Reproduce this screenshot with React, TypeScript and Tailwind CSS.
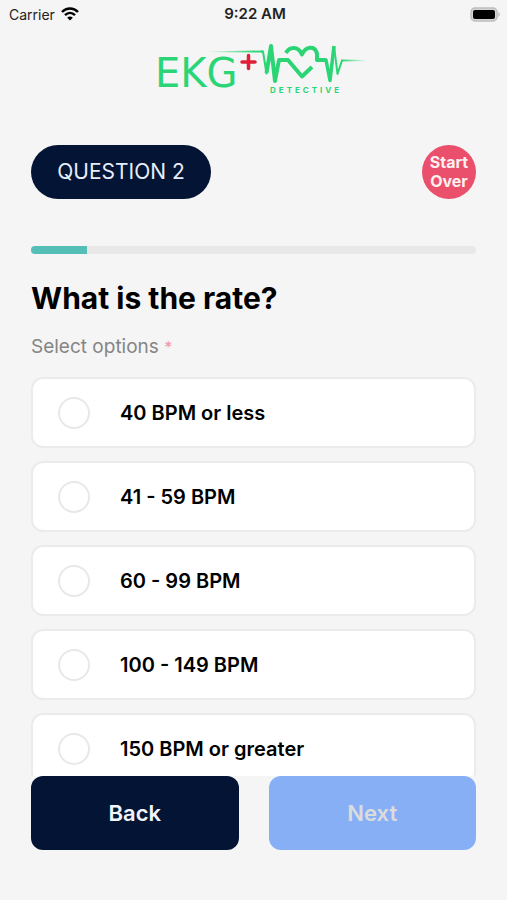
import React, { useState } from "react";

const OPTIONS = [
  "40 BPM or less",
  "41 - 59 BPM",
  "60 - 99 BPM",
  "100 - 149 BPM",
  "150 BPM or greater",
];

const PROGRESS = 12.5;

function StatusBar() {
  return (
    <div className="grid h-7 grid-cols-3 items-center pl-[9px] pr-[6px] text-[14px] text-[#222]">
      <div className="flex items-center gap-[6px]">
        <span>Carrier</span>
        <svg width="18" height="14" viewBox="0 0 18 14" fill="none" stroke="#000" strokeWidth="2.5" aria-hidden="true">
          <path d="M1 5 C5.5 .4 12.500 .4 17 5" />
          <path d="M4 8.200 C7 5.300 11 5.300 14 8.200" />
          <path d="M9 13.500 L6.200 10.700 C7.800 9.200 10.200 9.200 11.800 10.700 Z" fill="#000" stroke="none" />
        </svg>
      </div>
      <span className="text-center text-[15px] font-semibold">9:22 AM</span>
      <svg className="justify-self-end" width="31" height="15" viewBox="0 0 31 15" aria-hidden="true">
        <rect x="1" y="1" width="26" height="13" rx="4" fill="#d4d4d4" stroke="#bdbdbd" strokeWidth="1.500" />
        <rect x="3" y="3" width="22" height="9" rx="2" fill="#000" />
        <path d="M28.500 5 Q31 7.500 28.500 10 Z" fill="#aaa" />
      </svg>
    </div>
  );
}

function Logo() {
  return (
    <svg className="mx-auto" width="230" height="60" viewBox="-16 0 230 60" fill="none" role="img" aria-label="EKG Detective">
      <defs>
        <linearGradient id="lead-in" gradientUnits="userSpaceOnUse" x1="50" y1="0" x2="100" y2="0">
          <stop offset="0" stopColor="#2bd575" stopOpacity="0" />
          <stop offset="1" stopColor="#2bd575" />
        </linearGradient>
        <linearGradient id="lead-out" gradientUnits="userSpaceOnUse" x1="187" y1="0" x2="212" y2="0">
          <stop offset="0" stopColor="#2bd575" />
          <stop offset="1" stopColor="#2bd575" stopOpacity="0" />
        </linearGradient>
      </defs>
      <text x="0" y="47" fill="#2bd575" className="font-['DejaVu_Sans'] text-[40px]">EKG</text>
      <path d="M93.500 15.500 V28.500 M87 22 H100" stroke="#e01f36" strokeWidth="3.500" strokeLinecap="round" />

      {/* Pulse line and heart */}
      <path d="M48 11.500 L108 10.500 V12.500 L48 12 Z" fill="url(#lead-in)" />
      <g stroke="#2bd575" strokeLinejoin="round">
        <path d="M106 11.500 H108 L111.500 33.500 L116 6" strokeWidth="2" />
        <path d="M111.500 33 L116 6 L120 41 L124 20 H133 L147 36.500 L157 27" strokeWidth="4" />
        <path d="M131 13 C134 7 143 5 147 14.500 C151 6 159 6 161.500 12 C163 16 161.500 18 162 20 H171" strokeWidth="4" />
        <path d="M169 20 H171 L175 40.500 L179 6" strokeWidth="3.500" />
        <path d="M179 6 L182.500 34 L187 20.500" strokeWidth="2" />
      </g>
      <path d="M186 19.500 L212 20 V21 L186 21.500 Z" fill="url(#lead-out)" />
      <text x="115" y="53" fill="#2bd575" className="text-[8px] font-bold tracking-[3px]">DETECTIVE</text>
    </svg>
  );
}

export default function App() {
  const [selected, setSelected] = useState<string | null>(null);

  return (
    <div className="flex h-screen flex-col bg-[#f5f5f5] font-['Inter',sans-serif] text-black">
      <StatusBar />

      <header className="pt-3">
        <Logo />
      </header>

      <main className="flex min-h-0 flex-1 flex-col px-[31px] pt-[45px]">
        <div className="flex items-center justify-between">
          <div className="flex h-[54px] w-[180px] items-center justify-center rounded-full bg-[#041434] text-[21px] text-[#e8edfa]">
            QUESTION 2
          </div>
          <button
            type="button"
            onClick={() => setSelected(null)}
            className="size-[54px] rounded-full bg-[#ea506b] text-[16px] leading-[19px] font-bold text-[#fff0f0]"
          >
            Start Over
          </button>
        </div>

        <div className="mt-[47px] h-2 shrink-0 overflow-hidden rounded-full bg-[#e8e8e8]">
          <div className="h-full bg-[#55bfb7]" style={{ width: `${PROGRESS}%` }} />
        </div>

        <h1 id="question" className="mt-6 text-[30px] leading-10 font-bold">What is the rate?</h1>
        <p className="mt-[15px] text-[19px] leading-7 text-[#858585]">
          Select options <span className="text-[16px] text-[#f0959f]">*</span>
        </p>

        {/* Answer list */}
        <div role="radiogroup" aria-labelledby="question" className="mt-4 min-h-0 flex-1 overflow-y-auto [scrollbar-width:none]">
          <div className="flex flex-col gap-[13px]">
            {OPTIONS.map((option) => (
              <label
                key={option}
                className="flex h-[71px] shrink-0 cursor-pointer items-center gap-[30px] rounded-xl border-2 border-[#ebebeb] bg-white pl-[25px] text-[20px] font-semibold"
              >
                <input
                  type="radio"
                  name="rate"
                  value={option}
                  checked={selected === option}
                  onChange={() => setSelected(option)}
                  className="size-8 appearance-none rounded-full border-2 border-[#e8e8e8] bg-white checked:border-[10px] checked:border-[#55bfb7]"
                />
                <span>{option}</span>
              </label>
            ))}
          </div>
        </div>
      </main>

      <footer className="grid grid-cols-2 gap-[30px] px-[31px] pb-[50px] text-[22px] font-semibold">
        <button type="button" className="h-[74px] rounded-xl bg-[#041434] text-[#f1f4fc]">
          Back
        </button>
        <button type="button" disabled={!selected} className="h-[74px] rounded-xl bg-[#3b82f6] text-white disabled:bg-[#86aff6] disabled:text-[#dcdcdc]">
          Next
        </button>
      </footer>
    </div>
  );
}
